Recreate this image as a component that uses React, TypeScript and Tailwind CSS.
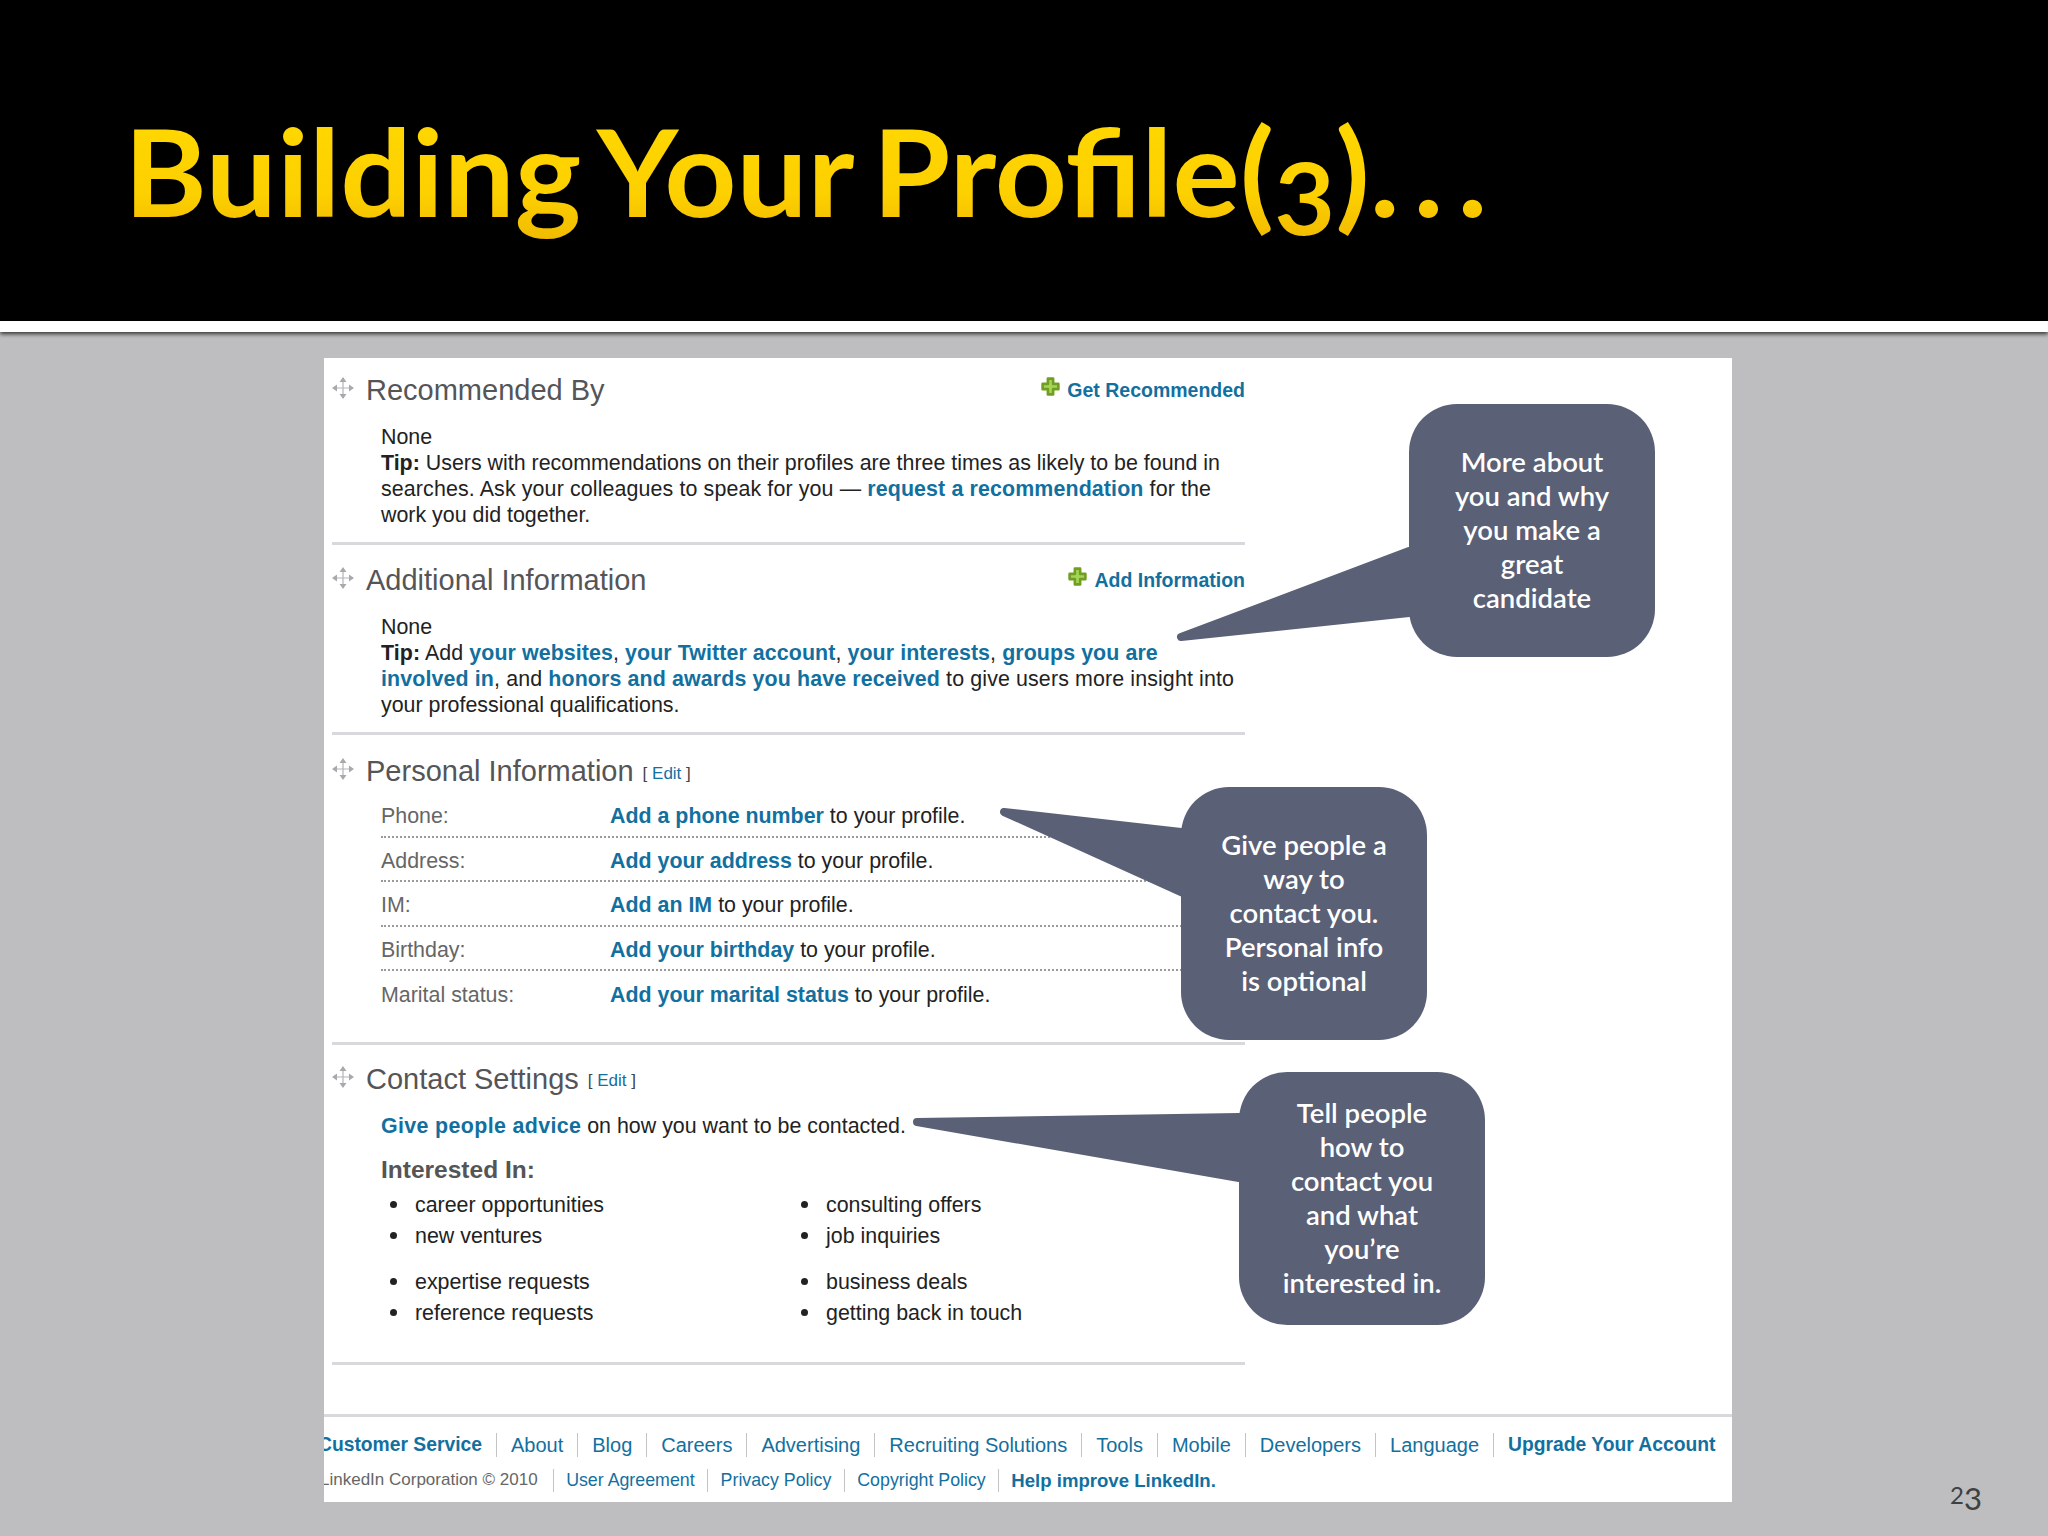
import React from 'react';

const PlusIcon = () => (
    <svg width="21" height="21" viewBox="0 0 20 20" className="shrink-0 -mt-[7px]">
        <path d="M7.5 2.5h5v5h5v5h-5v5h-5v-5h-5v-5h5z" fill="#a3d455" stroke="#6f9e22" strokeWidth="2.5" strokeLinejoin="round" />
    </svg>
);

const MoveIcon = () => (
    <svg width="22" height="22" viewBox="0 0 22 22" className="shrink-0 -mt-[4px]">
        <path d="M11 4v14M4 11h14" stroke="#b4b4b8" strokeWidth="1.2" />
        <path d="M11 0l3.5 5h-7zM11 22l3.5-5h-7zM0 11l5-3.5v7zM22 11l-5-3.5v7z" fill="#a9a9ad" />
    </svg>
);

const Link: React.FC<{ children: React.ReactNode }> = ({ children }) => (
    <span className="font-bold text-[#12709f]">{children}</span>
);

const Heading: React.FC<{ title: string; edit?: boolean; action?: string }> = ({ title, edit, action }) => (
    <div className="flex items-center h-[40px]">
        <MoveIcon />
        <span className="ml-[12px] text-[29px] text-[#555558]">{title}</span>
        {edit && (
            <span className="ml-[9px] mt-[5px] text-[17px] text-[#444]">
                [ <span className="text-[#12709f]">Edit</span> ]
            </span>
        )}
        {action && (
            <div className="ml-auto flex items-center gap-[6px] text-[19.5px] font-bold text-[#12709f]">
                <PlusIcon />
                <span>{action}</span>
            </div>
        )}
    </div>
);

const Rule = () => <div className="h-[3px] bg-[#d9d9dd]" />;

const rows = [
    { label: 'Phone:', link: 'Add a phone number' },
    { label: 'Address:', link: 'Add your address' },
    { label: 'IM:', link: 'Add an IM' },
    { label: 'Birthday:', link: 'Add your birthday' },
    { label: 'Marital status:', link: 'Add your marital status' },
];

const interests = [
    [['career opportunities', 'consulting offers'], ['new ventures', 'job inquiries']],
    [['expertise requests', 'business deals'], ['reference requests', 'getting back in touch']],
];

const footerTop = ['About', 'Blog', 'Careers', 'Advertising', 'Recruiting Solutions', 'Tools', 'Mobile', 'Developers', 'Language'];
const footerBottom = ['User Agreement', 'Privacy Policy', 'Copyright Policy'];

const Callout: React.FC<{ className: string; tail: string; children: React.ReactNode }> = ({ className, tail, children }) => (
    <div className={`absolute w-[246px] h-[253px] pb-[2px] rounded-[48px] bg-[#5a6076] flex items-center justify-center text-center text-white text-[27.5px] leading-[34px] font-semibold font-['Lato',sans-serif] ${className}`}>
        <svg className="absolute left-0 top-0 overflow-visible" width="246" height="253">
            <polygon points={tail} fill="#5a6076" stroke="#5a6076" strokeWidth="8" strokeLinejoin="round" />
        </svg>
        <div className="relative">{children}</div>
    </div>
);

export default function App() {
    return (
        <div className="relative w-[2048px] h-[1536px] flex flex-col overflow-hidden bg-[#bebdbf] font-['Liberation_Sans',Arial,sans-serif]">
            <header className="h-[321px] bg-black flex items-center pl-[124px]">
                <h1 className="mb-[-65px] pb-[30px] origin-left scale-x-[1.05] whitespace-nowrap text-[120px] font-bold leading-none bg-gradient-to-b from-[#ffd800] via-[#fdd000] to-[#e8aa00] bg-clip-text text-transparent font-['Lato',sans-serif] [word-spacing:-0.08em]">
                    Building Your Profile(<span className="align-[-18px] text-[100px]">3</span>)<span className="tracking-[0.11em]">...</span>
                </h1>
            </header>
            <div className="h-[11px] bg-white shadow-[0_2px_4px_rgba(0,0,0,0.75)]" />

            <main className="flex pl-[324px] pt-[26px]">
                <div className="w-[1408px] h-[1144px] bg-white flex flex-col overflow-hidden">
                    <div className="w-[913px] ml-[8px] mt-[12px] text-[21.4px] leading-[26px] text-[#222]">
                        <Heading title="Recommended By" action="Get Recommended" />
                        <div className="ml-[49px] mt-[14px] mb-[14px] whitespace-nowrap">
                            <div>None</div>
                            <div>
                                <b>Tip:</b> Users with recommendations on their profiles are three times as likely to be found in<br />
                                <span className="tracking-[0.12px]">searches. Ask your colleagues to speak for you — <Link>request a recommendation</Link> for the</span><br />
                                work you did together.
                            </div>
                        </div>
                        <Rule />

                        <div className="mt-[15px]">
                            <Heading title="Additional Information" action="Add Information" />
                        </div>
                        <div className="ml-[49px] mt-[14px] mb-[14px] whitespace-nowrap">
                            <div>None</div>
                            <div>
                                <span className="tracking-[0.08px]"><b>Tip:</b> Add <Link>your websites</Link>, <Link>your Twitter account</Link>, <Link>your interests</Link>, <Link>groups you are</Link></span><br />
                                <span className="tracking-[0.12px]"><Link>involved in</Link>, and <Link>honors and awards you have received</Link> to give users more insight into</span><br />
                                your professional qualifications.
                            </div>
                        </div>
                        <Rule />

                        <div className="mt-[16px]">
                            <Heading title="Personal Information" edit />
                        </div>
                        <div className="ml-[49px] mt-[2px]">
                            {rows.map((row, i) => (
                                <div key={row.label} className={`flex h-[44.5px] pt-[4px] items-center ${i < rows.length - 1 ? 'border-b-2 border-dotted border-[#9a9a9a]' : ''}`}>
                                    <span className="w-[229px] text-[#666]">{row.label}</span>
                                    <span><Link>{row.link}</Link> to your profile.</span>
                                </div>
                            ))}
                        </div>
                        <div className="mt-[26px]"><Rule /></div>

                        <div className="mt-[14px]">
                            <Heading title="Contact Settings" edit />
                        </div>
                        <div className="ml-[49px] mt-[14px]">
                            <div><span className="tracking-[0.36px]"><Link>Give people advice</Link></span> on how you want to be contacted.</div>
                            <div className="mt-[18px] text-[24.5px] font-bold text-[#555]">Interested In:</div>
                            <div className="mt-[9px] flex flex-col gap-[20px]">
                                {interests.map((group, g) => (
                                    <div key={g} className="flex flex-col gap-[5px]">
                                        {group.map(pair => (
                                            <div key={pair[0]} className="flex">
                                                {pair.map((item, c) => (
                                                    <div key={item} className={`flex items-center ${c === 0 ? 'w-[418px] pl-[9px]' : 'pl-[2px]'}`}>
                                                        <span className="w-[7px] h-[7px] rounded-full bg-[#222] shrink-0" />
                                                        <span className="ml-[18px]">{item}</span>
                                                    </div>
                                                ))}
                                            </div>
                                        ))}
                                    </div>
                                ))}
                            </div>
                        </div>
                        <div className="mt-[36px]"><Rule /></div>
                    </div>

                    <div className="mt-[49px] h-[3px] bg-[#d9d8dd]" />
                    <div className="mt-[14px] flex items-center -ml-[6px] text-[20px] text-[#12709f] whitespace-nowrap">
                        <span className="pr-[14px] text-[19.3px] font-bold">Customer Service</span>
                        {footerTop.map(item => (
                            <span key={item} className="border-l border-[#c4c4c4] px-[14px] leading-[24px]">{item}</span>
                        ))}
                        <span className="border-l border-[#c4c4c4] pl-[14px] leading-[24px] text-[19.3px] font-bold">Upgrade Your Account</span>
                    </div>
                    <div className="mt-[8px] flex items-center -ml-[4px] text-[17.8px] text-[#12709f] whitespace-nowrap">
                        <span className="pr-[15px] text-[17px] text-[#666]">LinkedIn Corporation © 2010</span>
                        {footerBottom.map(item => (
                            <span key={item} className="border-l border-[#c4c4c4] px-[12.5px] leading-[23px]">{item}</span>
                        ))}
                        <span className="border-l border-[#c4c4c4] pl-[12px] leading-[23px] text-[18.6px] font-bold">Help improve LinkedIn.</span>
                    </div>
                </div>
                <div className="self-end ml-[218px] mb-[-12px] flex items-start leading-none text-[#404040] font-['Lato',sans-serif]">
                    <span className="text-[24px]">2</span>
                    <span className="text-[31px]">3</span>
                </div>
            </main>

            <Callout className="left-[1409px] top-[404px]" tail="0,147 -228,233 0,209">
                More about<br />you and why<br />you make a<br />great<br />candidate
            </Callout>
            <Callout className="left-[1181px] top-[787px]" tail="0,45 -177,25 0,105">
                Give people a<br />way to<br />contact you.<br />Personal info<br />is optional
            </Callout>
            <Callout className="left-[1239px] top-[1072px]" tail="0,45 -322,50 0,106">
                Tell people<br />how to<br />contact you<br />and what<br />you’re<br />interested in.
            </Callout>
        </div>
    );
}
